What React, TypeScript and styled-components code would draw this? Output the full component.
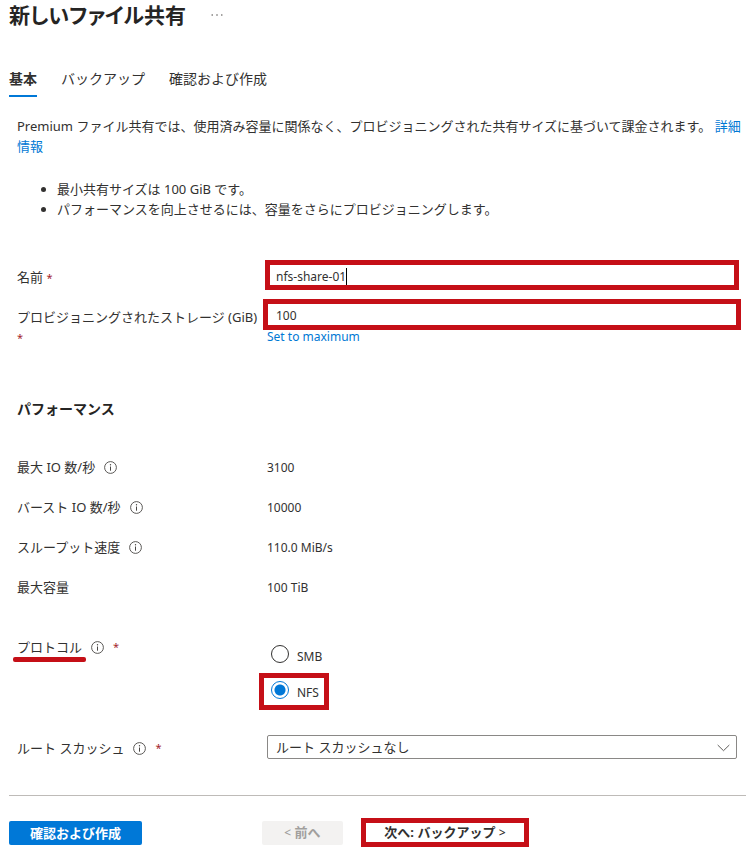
import React, { useState } from "react";
import styled, { createGlobalStyle, css } from "styled-components";

const color = {
  text: "#323130",
  strong: "#252423",
  link: "#0078d4",
  primary: "#0078d7",
  required: "#a4262c",
  highlight: "#c50f17",
  border: "#8a8886",
  rule: "#bebbb8",
};

const GlobalStyle = createGlobalStyle`
  *, *::before, *::after { box-sizing: border-box; }
  body {
    margin: 0;
    background: #fff;
    color: ${color.text};
    font: 13px/20px "Noto Sans", "Noto Sans CJK JP", sans-serif;
  }
  button, input, select { font: inherit; color: inherit; }
`;

const Page = styled.main`
  padding: 0 0 6px 9px;
`;

const Header = styled.header`
  display: flex;
  align-items: center;
  gap: 25px;
  height: 30px;
`;

const Title = styled.h1`
  margin: 0;
  color: ${color.strong};
  font-size: 21px;
  line-height: 30px;
  font-weight: 700;
  font-feature-settings: "palt";
`;

const MoreButton = styled.button`
  display: flex;
  padding: 0;
  border: 0;
  background: none;
`;

const Tabs = styled.nav`
  display: flex;
  gap: 24px;
  margin-top: 39px;
  font-size: 14px;
`;

const Tab = styled.button<{ $active?: boolean }>`
  height: 28px;
  padding: 0 0 6px;
  border: 0;
  border-bottom: 2px solid ${(p) => (p.$active ? color.primary : "transparent")};
  background: none;
  line-height: 20px;
  font-weight: ${(p) => (p.$active ? 700 : 400)};
`;

const Content = styled.div`
  padding-left: 8px;
`;

const Description = styled.p`
  margin: 19px 0 0;
`;

const Link = styled.a`
  color: ${color.link};
  text-decoration: none;
`;

const Notes = styled.ul`
  margin: 23px 0 0;
  padding-left: 40px;
`;

const Form = styled.div`
  padding-right: 9px;
`;

const Row = styled.div<{ $top?: number; $labelTop?: number }>`
  display: grid;
  grid-template-columns: 246px minmax(0, 1fr);
  column-gap: 4px;
  align-items: start;
  margin-top: ${(p) => p.$top ?? 0}px;

  & > :first-child {
    padding-top: ${(p) => p.$labelTop ?? 0}px;
  }
`;

const Required = styled.span`
  color: ${color.required};
  font-size: 11px;
  line-height: 12px;
`;

const LabelLine = styled.div`
  display: flex;
  align-items: center;
  gap: 9px;
`;

const Marked = styled.span`
  position: relative;

  &::after {
    content: "";
    position: absolute;
    left: -4px;
    right: -4px;
    bottom: -5px;
    height: 5px;
    border-radius: 2px;
    background: ${color.highlight};
  }
`;

const highlight = css`
  border: 5px solid ${color.highlight};
`;

const FieldFrame = styled.label<{ $bleed: number; $height: number }>`
  ${highlight}
  display: flex;
  align-items: center;
  height: ${(p) => p.$height}px;
  margin: 0 -${(p) => p.$bleed}px;
  padding-top: 3px;
  padding-left: ${(p) => p.$bleed + 4}px;
  cursor: text;
`;

const TextInput = styled.input<{ $hug?: boolean }>`
  ${(p) => (p.$hug ? "field-sizing: content;" : "flex: 1; min-width: 0;")}
  height: 20px;
  padding: 0;
  border: 0;
  outline: 0;
  background: none;
  font-size: 12px;
`;

const Caret = styled.span`
  width: 1px;
  height: 17px;
  background: #000;
`;

const MaximumButton = styled.button`
  display: block;
  padding: 0;
  border: 0;
  background: none;
  color: ${color.link};
  font-size: 12px;
  line-height: 14px;
`;

const SectionTitle = styled.h2`
  margin: 52px 0 38px;
  font-size: 14px;
  line-height: 20px;
  font-weight: 700;
  color: ${color.strong};
`;

const Metrics = styled.dl`
  display: grid;
  gap: 18px;
  margin: 0;
`;

const MetricValue = styled.dd`
  margin: 0;
  font-size: 12px;
  line-height: 22px;
`;

const RadioGroup = styled.div`
  display: flex;
  flex-direction: column;
  align-items: flex-start;
  gap: 4px;
  padding: 8px 0 0 4px;
`;

const RadioLabel = styled.label<{ $marked?: boolean }>`
  display: flex;
  gap: 8px;
  font-size: 12px;
  line-height: 24px;
  ${(p) =>
    p.$marked &&
    css`
      ${highlight}
      height: 37px;
      margin-left: -12px;
      padding: 3px 5px 0 7px;
    `}
`;

const Radio = styled.input`
  appearance: none;
  width: 18px;
  height: 18px;
  margin: 0;
  border: 1px solid ${color.text};
  border-radius: 50%;

  &:checked {
    border-color: ${color.primary};
    background: radial-gradient(circle, ${color.primary} 5px, transparent 6px);
  }
`;

const SelectFrame = styled.div`
  position: relative;

  svg {
    position: absolute;
    right: 7px;
    top: 9px;
    pointer-events: none;
  }
`;

const Select = styled.select`
  display: block;
  appearance: none;
  width: 100%;
  height: 24px;
  padding: 0 28px 0 8px;
  border: 1px solid ${color.border};
  border-radius: 2px;
  background: #fff;
  line-height: 20px;
`;

const Footer = styled.footer`
  display: flex;
  align-items: center;
  margin-top: 36px;
  padding-top: 22px;
  border-top: 1px solid ${color.rule};
`;

const Button = styled.button<{ $kind: "primary" | "muted" | "next" }>`
  height: 24px;
  padding: 0;
  border: 0;
  border-radius: 2px;
  font-weight: 700;
  line-height: 18px;
  white-space: nowrap;
  ${(p) =>
    p.$kind === "primary" &&
    css`
      width: 133px;
      background: ${color.primary};
      color: #fff;
    `}
  ${(p) =>
    p.$kind === "muted" &&
    css`
      width: 81px;
      margin: 0 18px 0 120px;
      background: #f3f2f1;
      color: #a19f9d;
    `}
  ${(p) =>
    p.$kind === "next" &&
    css`
      ${highlight}
      width: 168px;
      height: 29px;
      border-radius: 0;
      background: #fff;
    `}
`;

const Arrow = styled.span`
  font-size: 12px;
  font-weight: 500;
`;

const InfoIcon = () => (
  <svg width="13" height="13" viewBox="0 0 13 13" fill="none" aria-hidden="true">
    <circle cx="6.5" cy="6.5" r="5.9" stroke="#484644" strokeWidth="0.9" />
    <path d="M6.5 5.5v4.2" stroke="#484644" />
    <circle cx="6.5" cy="3.7" r="0.7" fill="#484644" />
  </svg>
);

const Chevron = () => (
  <svg width="13" height="8" viewBox="0 0 13 8" fill="none" aria-hidden="true">
    <path d="M0.7 1l5.8 5.7L12.3 1" stroke="#605e5c" />
  </svg>
);

const Dots = () => (
  <svg width="12" height="2" viewBox="0 0 12 2" fill="#605e5c" aria-hidden="true">
    <circle cx="1.2" cy="1" r="0.8" />
    <circle cx="6" cy="1" r="0.8" />
    <circle cx="10.8" cy="1" r="0.8" />
  </svg>
);

const metrics = [
  { label: "最大 IO 数/秒", value: "3100", info: true },
  { label: "バースト IO 数/秒", value: "10000", info: true },
  { label: "スループット速度", value: "110.0 MiB/s", info: true },
  { label: "最大容量", value: "100 TiB", info: false },
];

export default function App() {
  const [name, setName] = useState("nfs-share-01");
  const [size, setSize] = useState("100");
  const [protocol, setProtocol] = useState("NFS");

  return (
    <>
      <GlobalStyle />
      <Page lang="ja">
        <Header>
          <Title>新しいファイル共有</Title>
          <MoreButton aria-label="その他">
            <Dots />
          </MoreButton>
        </Header>
        <Tabs>
          <Tab $active>基本</Tab>
          <Tab>バックアップ</Tab>
          <Tab>確認および作成</Tab>
        </Tabs>
        <Content>
          <Description>
            Premium ファイル共有では、使用済み容量に関係なく、プロビジョニングされた共有サイズに基づいて課金されます。{" "}
            <Link href="#details">詳細情報</Link>
          </Description>
          <Notes>
            <li>最小共有サイズは 100 GiB です。</li>
            <li>パフォーマンスを向上させるには、容量をさらにプロビジョニングします。</li>
          </Notes>
          <Form>
            <Row $top={41} $labelTop={7}>
              <label htmlFor="share-name">
                名前 <Required>*</Required>
              </label>
              <FieldFrame $bleed={2} $height={30}>
                <TextInput id="share-name" $hug value={name} onChange={(e) => setName(e.target.value)} />
                <Caret />
              </FieldFrame>
            </Row>
            <Row $top={9} $labelTop={8}>
              <label htmlFor="share-size">
                プロビジョニングされたストレージ (GiB) <Required>*</Required>
              </label>
              <div>
                <FieldFrame $bleed={4} $height={31}>
                  <TextInput id="share-size" value={size} onChange={(e) => setSize(e.target.value)} />
                </FieldFrame>
                <MaximumButton onClick={() => setSize("102400")}>Set to maximum</MaximumButton>
              </div>
            </Row>
            <SectionTitle>パフォーマンス</SectionTitle>
            <Metrics>
              {metrics.map((m) => (
                <Row key={m.label}>
                  <LabelLine as="dt">
                    {m.label}
                    {m.info && <InfoIcon />}
                  </LabelLine>
                  <MetricValue>{m.value}</MetricValue>
                </Row>
              ))}
            </Metrics>
            <Row $top={38}>
              <LabelLine id="protocol-label">
                <Marked>プロトコル</Marked>
                <InfoIcon />
                <Required>*</Required>
              </LabelLine>
              <RadioGroup role="radiogroup" aria-labelledby="protocol-label">
                {["SMB", "NFS"].map((p) => (
                  <RadioLabel key={p} $marked={p === "NFS"}>
                    <Radio type="radio" name="protocol" checked={protocol === p} onChange={() => setProtocol(p)} />
                    {p}
                  </RadioLabel>
                ))}
              </RadioGroup>
            </Row>
            <Row $top={25} $labelTop={3}>
              <LabelLine as="label" htmlFor="root-squash">
                ルート スカッシュ
                <InfoIcon />
                <Required>*</Required>
              </LabelLine>
              <SelectFrame>
                <Select id="root-squash">
                  <option>ルート スカッシュなし</option>
                </Select>
                <Chevron />
              </SelectFrame>
            </Row>
          </Form>
        </Content>
        <Footer>
          <Button $kind="primary">確認および作成</Button>
          <Button $kind="muted" disabled>
            <Arrow>&lt;</Arrow> 前へ
          </Button>
          <Button $kind="next">
            次へ: バックアップ <Arrow>&gt;</Arrow>
          </Button>
        </Footer>
      </Page>
    </>
  );
}
